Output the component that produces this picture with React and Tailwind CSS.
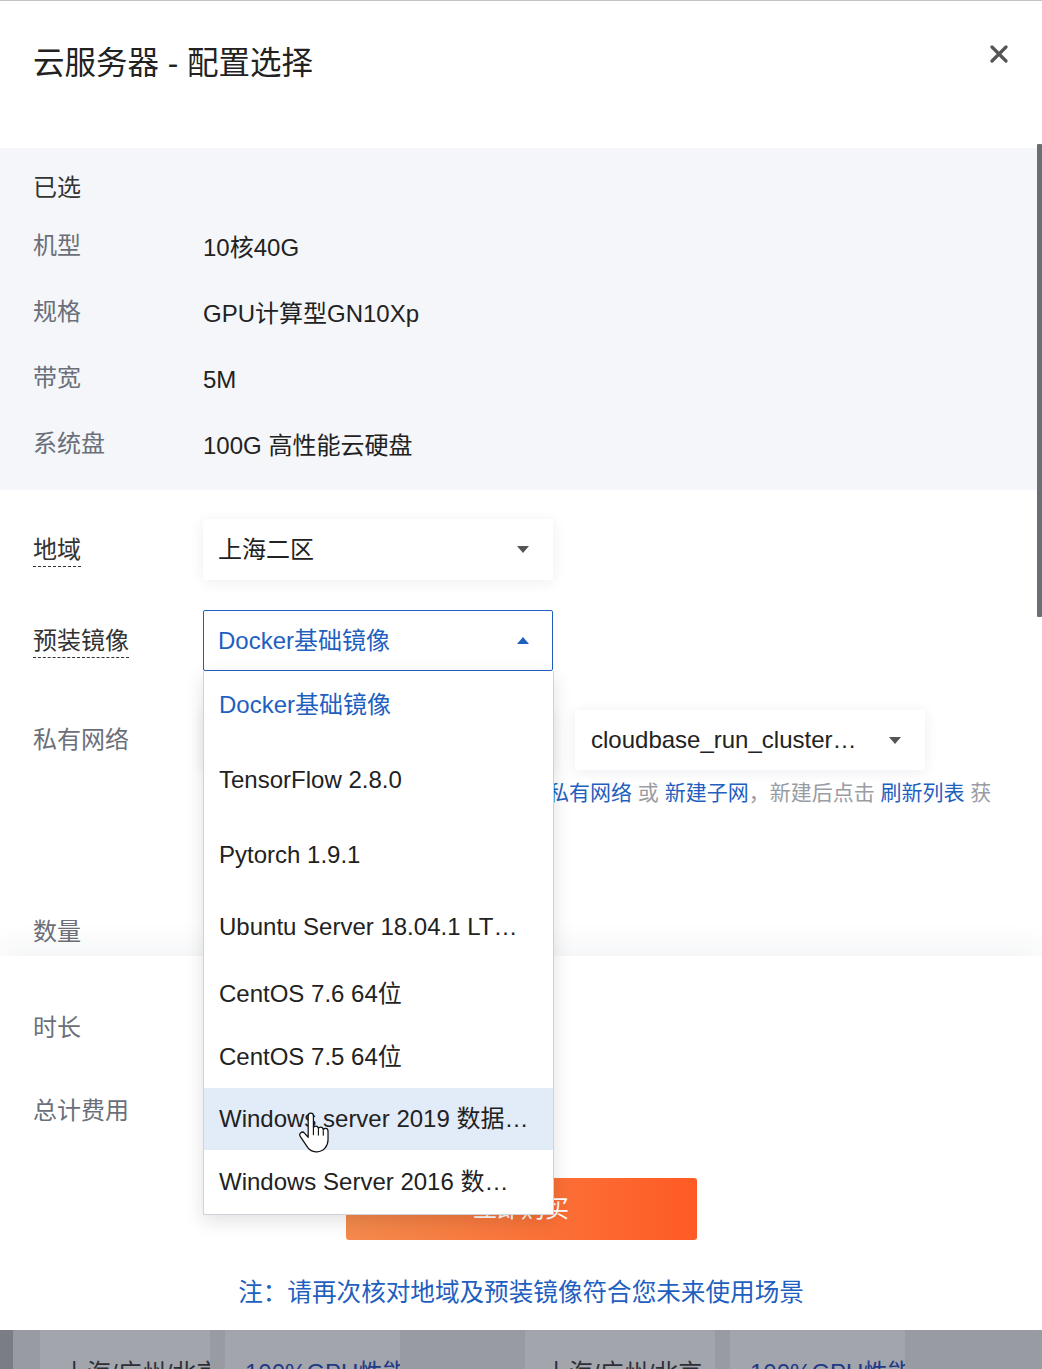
import React from "react";

const Caret = ({ up = false, color = "#555" }) => (
  <svg width="12" height="7" viewBox="0 0 12 7" className="shrink-0">
    {up ? (
      <polygon points="0,7 12,7 6,0" fill={color} />
    ) : (
      <polygon points="0,0 12,0 6,7" fill={color} />
    )}
  </svg>
);

const HandCursor = () => (
  <svg width="34" height="41" viewBox="0 0 30 36">
    <path
      d="M9 3.5c0-1.4 1-2.5 2.3-2.5s2.3 1.1 2.3 2.5v10.2c.4-.9 1.2-1.4 2.1-1.4 1.2 0 2.1.9 2.3 2.1.4-.7 1.2-1.1 2-1.1 1.2 0 2.1.9 2.3 2.1.4-.6 1.1-1 1.9-1 1.3 0 2.3 1.1 2.3 2.5v7.6c0 5.6-4 10.5-9.6 10.5h-1.2c-3.1 0-5.4-1.3-7.2-3.8L2.1 21.6c-.8-1.1-.6-2.6.4-3.4 1-.8 2.4-.6 3.2.4L9 22.2V3.5z"
      fill="#fff"
      stroke="#111"
      strokeWidth="1.1"
      strokeLinejoin="round"
    />
    <path d="M13.6 14v6M18 15.3v5M22.3 16.4v4" stroke="#111" strokeWidth="1" strokeLinecap="round" />
  </svg>
);

const InfoRow = ({ label, value }) => (
  <div className="flex items-center h-[66px]">
    <div className="w-[170px] text-[#6a6f79] -mt-[4px]">{label}</div>
    <div className="text-[#222]">{value}</div>
  </div>
);

const items = [
  { t: "Docker基础镜像", h: "h-[71px]", sel: true },
  { t: "TensorFlow 2.8.0", h: "h-[75px]" },
  { t: "Pytorch 1.9.1", h: "h-[75px]" },
  { t: "Ubuntu Server 18.04.1 LT…", h: "h-[70px]" },
  { t: "CentOS 7.6 64位", h: "h-[63px]" },
  { t: "CentOS 7.5 64位", h: "h-[63px]" },
  { t: "Windows server 2019 数据…", h: "h-[62px]", hover: true },
  { t: "Windows Server 2016 数…", h: "h-[63px]" },
];

export default function App() {
  return (
    <div className="relative w-[1042px] h-[1369px] overflow-hidden bg-[#989ba2] font-['Liberation_Sans','Noto_Sans_CJK_SC',sans-serif] text-[24px]">
      {/* modal */}
      <div className="relative h-[1330px] bg-white rounded-b-[6px] border-t border-[#c4c4c4] flex flex-col">
        {/* header */}
        <div className="h-[147px] shrink-0 flex items-start justify-between pl-[33px] pr-[34px] pt-[40px]">
          <div className="text-[31.5px] leading-[44px] text-[#222]">云服务器 - 配置选择</div>
          <svg width="18" height="18" viewBox="0 0 18 18" className="mt-[4px]">
            <path d="M2 2L16 16M16 2L2 16" stroke="#555" strokeWidth="3.2" strokeLinecap="round" />
          </svg>
        </div>

        {/* scroll area */}
        <div className="h-[808px] shrink-0 flex">
          <div className="flex-1 flex flex-col">
            {/* selected summary */}
            <div className="bg-[#f4f6f9] pt-[20px] pb-[11px] px-[33px]">
              <div className="h-[40px] leading-[40px] text-[#333]">已选</div>
              <div className="mt-[7px]">
                <InfoRow label="机型" value="10核40G" />
                <InfoRow label="规格" value="GPU计算型GN10Xp" />
                <InfoRow label="带宽" value="5M" />
                <InfoRow label="系统盘" value="100G 高性能云硬盘" />
              </div>
            </div>

            {/* form */}
            <div className="pt-[29px] px-[33px]">
              {/* region */}
              <div className="flex items-center h-[61px]">
                <div className="w-[170px]">
                  <span className="inline-block leading-[32px] text-[#333] border-b-[1.5px] border-dashed border-[#333]">地域</span>
                </div>
                <div className="w-[350px] h-[61px] bg-white rounded-[3px] shadow-[0_2px_14px_rgba(30,40,80,0.08)] flex items-center justify-between pl-[15px] pr-[24px] text-[#222]">
                  <span>上海二区</span>
                  <Caret />
                </div>
              </div>

              {/* image */}
              <div className="flex items-center h-[61px] mt-[30px]">
                <div className="w-[170px]">
                  <span className="inline-block leading-[32px] text-[#333] border-b-[1.5px] border-dashed border-[#333]">预装镜像</span>
                </div>
                <div className="relative w-[350px] h-[61px] z-20">
                  <div className="h-full bg-white rounded-[2px] border-[1.5px] border-[#1f5fbf] flex items-center justify-between pl-[14px] pr-[23px] text-[#1f5fbf]">
                    <span>Docker基础镜像</span>
                    <Caret up color="#1f5fbf" />
                  </div>
                  {/* dropdown */}
                  <div className="absolute left-0 top-full w-[351px] bg-white border border-[#cfd2d8] border-t-0 shadow-[0_6px_18px_rgba(0,0,0,0.12)] flex flex-col pb-[1px]">
                    {items.map((it) => (
                      <div
                        key={it.t}
                        className={`${it.h} flex items-center pl-[15px] whitespace-nowrap ${
                          it.hover ? "bg-[#e2ebf8]" : ""
                        } ${it.sel ? "text-[#1f5fbf] pb-[3px]" : "text-[#222]"}`}
                      >
                        {it.t}
                      </div>
                    ))}
                  </div>
                </div>
              </div>

              {/* vpc */}
              <div className="flex items-center h-[60px] mt-[39px]">
                <div className="w-[170px] text-[#6a6f79]">私有网络</div>
                <div className="w-[350px] h-[60px] bg-white shadow-[0_2px_14px_rgba(30,40,80,0.08)] flex items-center justify-between pl-[15px] pr-[24px] text-[#222]">
                  <span>Default-VPC</span>
                  <Caret />
                </div>
                <div className="ml-[22px] w-[350px] h-[60px] bg-white rounded-[3px] shadow-[0_2px_14px_rgba(30,40,80,0.08)] flex items-center justify-between pl-[16px] pr-[24px] text-[#222]">
                  <span className="whitespace-nowrap">cloudbase_run_cluster…</span>
                  <Caret />
                </div>
              </div>
              <div className="mt-[8px] pl-[179px] text-[21px] leading-[30px] text-[#999ca3] whitespace-nowrap">
                <div>
                  如现有网络不合适，可去控制台<span className="text-[#1f5fbf]">新建私有网络</span> 或 <span className="text-[#1f5fbf]">新建子网</span>，新建后点击 <span className="text-[#1f5fbf]">刷新列表</span> 获
                </div>
                <div>取最新网络。</div>
              </div>

              {/* count */}
              <div className="flex items-center h-[50px] mt-[69px]">
                <div className="w-[170px] text-[#6a6f79]">数量</div>
              </div>
            </div>
          </div>
          {/* scrollbar */}
          <div className="w-[5px] shrink-0 flex flex-col">
            <div className="h-[473px] -mt-[4px] bg-[#6b6e75] rounded-[1px]" />
          </div>
        </div>

        {/* footer */}
        <div className="relative z-10 flex-1 bg-white shadow-[0_-14px_24px_rgba(30,40,80,0.045)] px-[33px] pt-[47px]">
          <div className="flex items-center h-[50px] text-[#6a6f79]">时长</div>
          <div className="flex items-center h-[50px] mt-[33px] text-[#6a6f79]">总计费用</div>
          <div className="mt-[42px] mx-auto w-[351px] h-[62px] rounded-[3px] bg-gradient-to-r from-[#f38a4c] to-[#ff5a24] flex items-center justify-center text-white">
            立即购买
          </div>
          <div className="mt-[36px] h-[34px] leading-[34px] text-center text-[24.6px] text-[#1f5fbf]">
            注：请再次核对地域及预装镜像符合您未来使用场景
          </div>
        </div>
      </div>

      {/* background page strip */}
      <div className="h-[39px] flex items-start text-[24px] leading-[30px]">
        <div className="w-[13px] h-full bg-[#7a7d84]" />
        <div className="w-[27px] h-full" />
        <div className="w-[170px] h-full bg-[#a2a5ab] pl-[23px] pt-[28px] text-[#2d3038] whitespace-nowrap overflow-hidden">上海/广州/北京</div>
        <div className="w-[15px] h-full" />
        <div className="w-[175px] h-full bg-[#a2a5ab] pl-[20px] pt-[28px] text-[#1f3a86] whitespace-nowrap overflow-hidden">100%GPU性能</div>
        <div className="w-[125px] h-full" />
        <div className="w-[190px] h-full bg-[#a2a5ab] pl-[20px] pt-[28px] text-[#2d3038] whitespace-nowrap overflow-hidden">上海/广州/北京</div>
        <div className="w-[15px] h-full" />
        <div className="w-[175px] h-full bg-[#a2a5ab] pl-[20px] pt-[28px] text-[#1f3a86] whitespace-nowrap overflow-hidden">100%GPU性能</div>
      </div>

      {/* mouse cursor */}
      <div className="absolute left-[298px] top-[1112px] z-30">
        <HandCursor />
      </div>
    </div>
  );
}
